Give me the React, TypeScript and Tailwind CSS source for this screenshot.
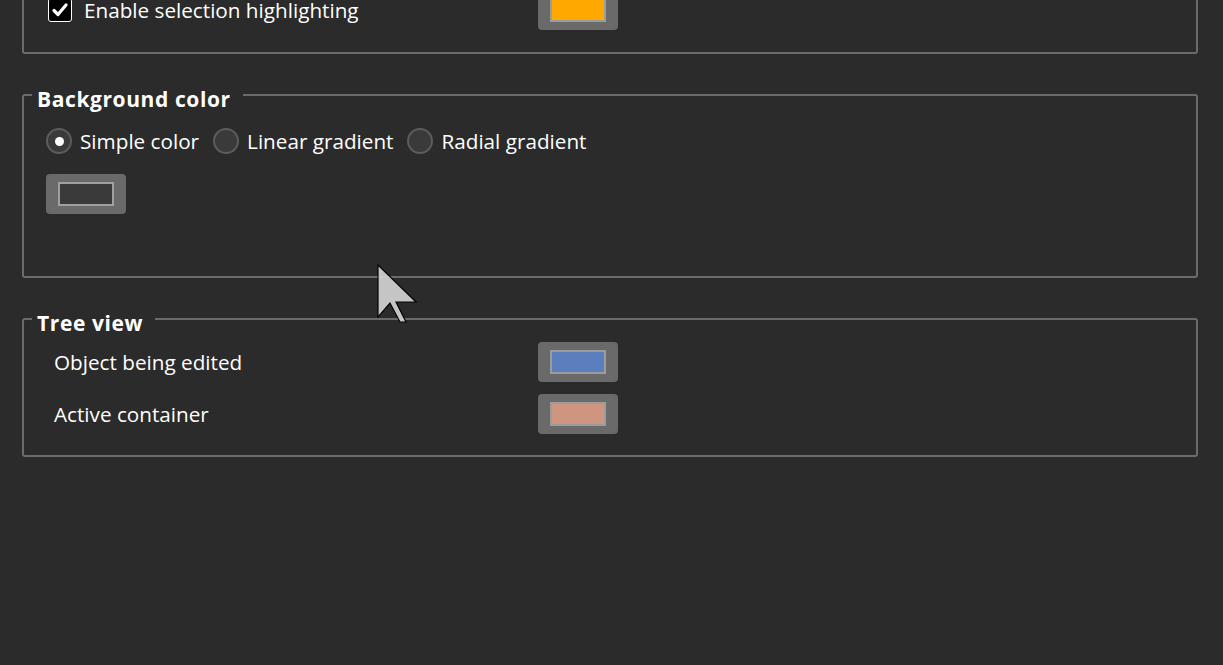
import React from "react";

const font = "font-['Open_Sans','Noto_Sans',sans-serif]";

const Swatch = ({ color, edge = "#9c9c9c" }: { color: string; edge?: string }) => (
  <div className="w-[80px] h-[40px] rounded-[4px] bg-[#6a6a6a] flex items-center justify-center shrink-0">
    <div className="w-[56px] h-[24px] border-2" style={{ backgroundColor: color, borderColor: edge }} />
  </div>
);

const Radio = ({ checked, label }: { checked?: boolean; label: string }) => (
  <label className="flex items-center gap-[8px]">
    <span className="w-[26px] h-[26px] rounded-full border-2 border-[#5c5c5c] bg-[#3a3a3a] flex items-center justify-center">
      {checked && <span className="w-[9px] h-[9px] rounded-full bg-white" />}
    </span>
    <span>{label}</span>
  </label>
);

const Group = ({ title, children, className = "" }: { title: string; children: React.ReactNode; className?: string }) => (
  <fieldset className={`border-2 border-[#6b6b6b] rounded-[3px] pl-[22px] pr-[22px] ${className}`}>
    <legend className="-ml-[14px] pl-[5px] pr-[12px] pt-[8px] text-[21px] font-bold leading-[26px] tracking-[0.6px]">{title}</legend>
    {children}
  </fieldset>
);

export default function App() {
  return (
    <div className={`relative w-[1223px] h-[665px] overflow-hidden bg-[#2b2b2b] text-white text-[20.7px] leading-[26px] pl-[22px] pr-[25px] ${font}`}>
      {/* selection group, its top is scrolled away */}
      <div className="-mt-[10px] border-2 border-t-0 border-[#6b6b6b] rounded-b-[3px] pl-[24px] pb-[22px]">
        <div className="h-[40px] flex items-center">
          <div className="w-[490px] flex items-center gap-[12px]">
            <span className="w-[24px] h-[24px] rounded-[3px] border-[1.5px] border-white bg-black flex items-center justify-center">
              <svg width="18" height="18" viewBox="0 0 18 18">
                <path d="M3 9.5 L7 13.5 L15 4" fill="none" stroke="white" strokeWidth="3.2" strokeLinecap="round" strokeLinejoin="round" />
              </svg>
            </span>
            <span>Enable selection highlighting</span>
          </div>
          <Swatch color="#ffa800" />
        </div>
      </div>

      <Group title="Background color" className="mt-[24px] pb-[62px]">
        <div className="pt-[16px] flex items-center gap-[14px]">
          <Radio checked label="Simple color" />
          <Radio label="Linear gradient" />
          <Radio label="Radial gradient" />
        </div>
        <div className="mt-[20px]">
          <Swatch color="#3a3a3a" edge="#a0a0a0" />
        </div>
      </Group>

      <Group title="Tree view" className="mt-[24px] pb-[21px]">
        <div className="pt-[6px] flex flex-col gap-[12px]">
          <div className="h-[40px] flex items-center">
            <span className="w-[492px] pl-[8px]">Object being edited</span>
            <Swatch color="#5b7fbd" />
          </div>
          <div className="h-[40px] flex items-center">
            <span className="w-[492px] pl-[8px]">Active container</span>
            <Swatch color="#d0957f" />
          </div>
        </div>
      </Group>

      {/* mouse pointer */}
      <svg className="absolute left-[377px] top-[264px] opacity-90" width="42" height="60" viewBox="-1 -1 42 60">
        <path d="M0 0 L0 52 L12 38 L22 57 L28 57 L18 37 L38 37 Z" fill="#d6d6d6" stroke="black" strokeWidth="1.2" strokeLinejoin="miter" />
      </svg>
    </div>
  );
}
